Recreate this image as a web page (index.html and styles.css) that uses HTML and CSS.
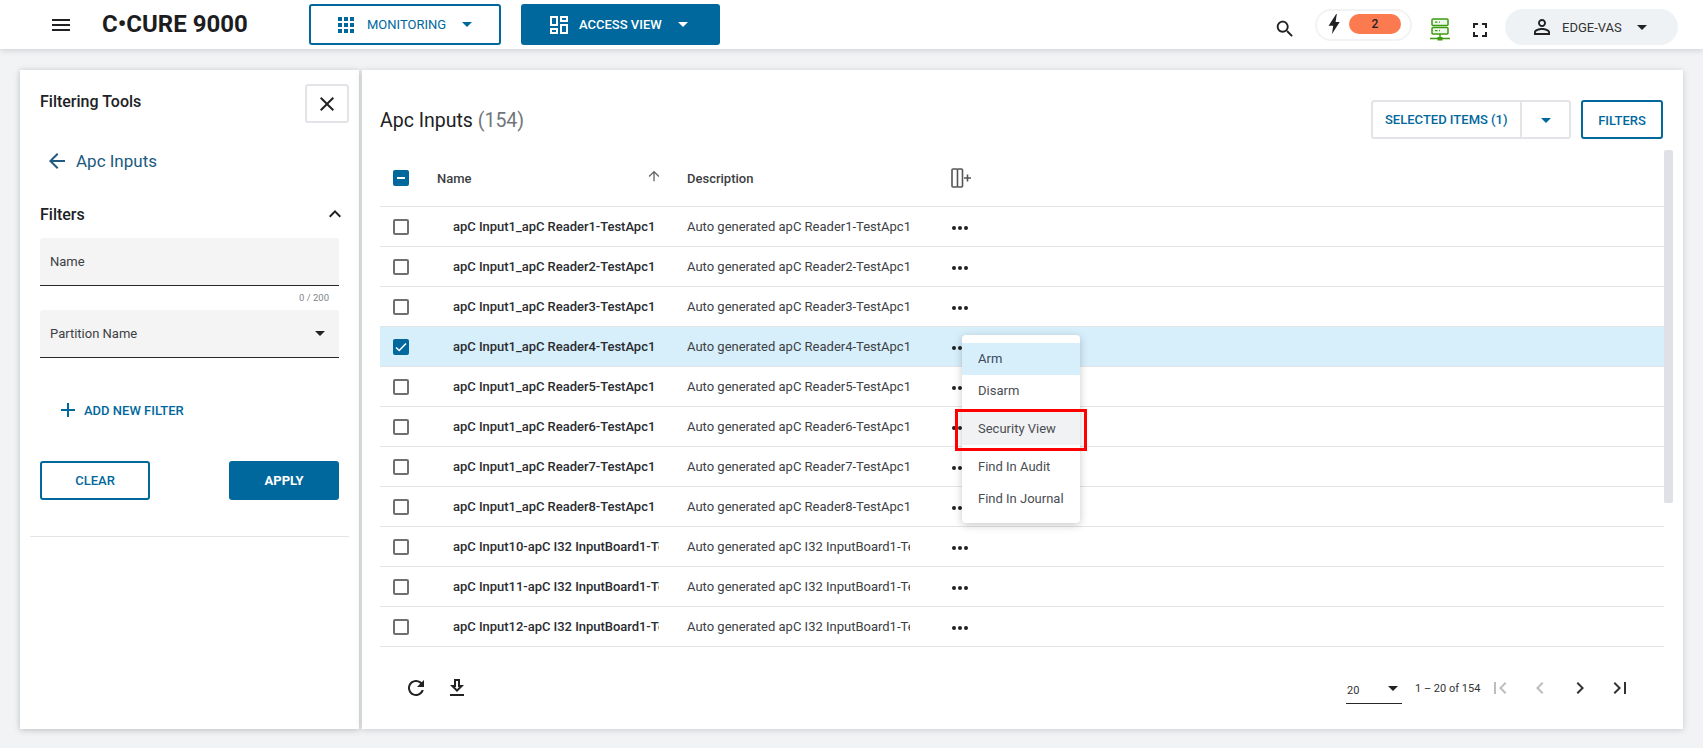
FILE: index.html
```html
<!DOCTYPE html>
<html lang="en">
<head>
<meta charset="utf-8">
<title>C•CURE 9000</title>
<link rel="stylesheet" href="styles.css">
</head>
<body>
<header class="topbar">
  <svg class="ico hamburger" viewBox="0 0 24 24"><path d="M3 18h18v-2H3v2zm0-5h18v-2H3v2zm0-7v2h18V6H3z"/></svg>
  <div class="brand">C•CURE 9000</div>
  <button class="navbtn navbtn-outline">
    <svg class="ico navicon-apps" viewBox="0 0 24 24"><path d="M4 8h4V4H4v4zm6 12h4v-4h-4v4zm-6 0h4v-4H4v4zm0-6h4v-4H4v4zm6 0h4v-4h-4v4zm6-10v4h4V4h-4zm-6 4h4V4h-4v4zm6 6h4v-4h-4v4zm0 6h4v-4h-4v4z"/></svg>
    <span>MONITORING</span><i class="caret caret-nav"></i>
  </button>
  <button class="navbtn navbtn-solid">
    <svg class="ico navicon-dash" viewBox="0 0 24 24"><path d="M19 5v2h-4V5h4M9 5v6H5V5h4m10 8v6h-4v-6h4M9 17v2H5v-2h4M21 3h-8v6h8V3zM11 3H3v10h8V3zm10 8h-8v10h8V11zm-10 4H3v6h8v-6z"/></svg>
    <span>ACCESS VIEW</span><i class="caret caret-nav"></i>
  </button>
  <div class="top-right">
    <svg class="ico search" viewBox="0 0 24 24"><path d="M15.5 14h-.79l-.28-.27C15.41 12.59 16 11.11 16 9.5 16 5.91 13.09 3 9.5 3S3 5.91 3 9.5 5.91 16 9.5 16c1.61 0 3.09-.59 4.23-1.57l.27.28v.79l5 4.99L20.49 19l-4.99-5zm-6 0C7.01 14 5 11.99 5 9.5S7.01 5 9.5 5 14 7.01 14 9.5 11.99 14 9.5 14z"/></svg>
    <div class="alarm">
      <svg class="ico bolt" viewBox="0 0 12 20"><path d="M4 20L5.200 11.800H.6L8.200 0h.6L7.600 8h4.100z"/></svg>
      <span class="alarm-count">2</span>
    </div>
    <svg class="server" viewBox="0 0 20 23" fill="none">
      <rect x="2" y="1" width="16" height="6.500" rx="1" fill="#eef8ee" stroke="#3d9a10" stroke-width="1.500"/>
      <rect x="2" y="9.500" width="16" height="6.500" rx="1" fill="#eef8ee" stroke="#3d9a10" stroke-width="1.500"/>
      <path d="M5 4.200h2.500M9 4.200h1M5 12.700h2.500M9 12.700h1" stroke="#3d9a10" stroke-width="1.300"/>
      <path d="M10 16v4M0 20.500h20" stroke="#3d9a10" stroke-width="1.500"/>
      <rect x="7.500" y="19" width="5" height="3.500" fill="#3d9a10"/>
    </svg>
    <svg class="ico fullscreen" viewBox="0 0 24 24"><path d="M7 14H5v5h5v-2H7v-3zm-2-4h2V7h3V5H5v5zm12 7h-3v2h5v-5h-2v3zM14 5v2h3v3h2V5h-5z"/></svg>
    <div class="user">
      <svg class="ico person" viewBox="0 0 24 24"><path d="M12 5.900c1.160 0 2.100.94 2.100 2.100s-.94 2.100-2.100 2.100S9.900 9.160 9.900 8s.94-2.100 2.100-2.100m0 9c2.970 0 6.100 1.460 6.100 2.100v1.100H5.900V17c0-.64 3.130-2.100 6.100-2.100M12 4C9.790 4 8 5.790 8 8s1.790 4 4 4 4-1.790 4-4-1.790-4-4-4zm0 9c-2.670 0-8 1.340-8 4v3h16v-3c0-2.660-5.330-4-8-4z"/></svg>
      <span>EDGE-VAS</span><i class="caret caret-dark"></i>
    </div>
  </div>
</header>

<div class="content">
  <aside class="sidebar">
    <div class="side-head">
      <h2 class="side-title">Filtering Tools</h2>
      <button class="closebtn"><svg class="ico" viewBox="0 0 24 24"><path d="M19 6.410L17.590 5 12 10.590 6.410 5 5 6.410 10.590 12 5 17.590 6.410 19 12 13.410 17.590 19 19 17.590 13.410 12z"/></svg></button>
    </div>
    <div class="back">
      <svg class="ico" viewBox="0 0 24 24"><path d="M20 11H7.830l5.590-5.590L12 4l-8 8 8 8 1.410-1.410L7.830 13H20v-2z"/></svg>
      <span>Apc Inputs</span>
    </div>
    <div class="filters-head">
      <h3 class="filters-title">Filters</h3>
      <svg class="ico" viewBox="0 0 24 24"><path d="M12 8l-6 6 1.410 1.410L12 10.830l4.590 4.580L18 14z"/></svg>
    </div>
    <div class="side-form">
      <div class="field"><span>Name</span></div>
      <div class="counter">0 / 200</div>
      <div class="field"><span>Partition Name</span><i class="caret caret-dark"></i></div>
      <div class="addfilter">
        <svg class="ico" viewBox="0 0 24 24"><path d="M19 13h-6v6h-2v-6H5v-2h6V5h2v6h6v2z"/></svg>
        <span>ADD NEW FILTER</span>
      </div>
      <div class="actions">
        <button class="btn btn-outline">CLEAR</button>
        <button class="btn btn-solid">APPLY</button>
      </div>
    </div>
    <div class="side-divider"></div>
  </aside>

  <main class="main">
    <div class="main-head">
      <h1 class="main-title">Apc Inputs <span class="count">(154)</span></h1>
      <div class="main-actions">
        <div class="splitbtn">
          <span class="split-label">SELECTED ITEMS (1)</span>
          <span class="split-caret"><i class="caret caret-blue"></i></span>
        </div>
        <button class="filtersbtn">FILTERS</button>
      </div>
    </div>

    <div class="table-wrap">
      <div class="table">
        <div class="row row-head">
          <div class="cell-check"><span class="cb cb-on"><i class="dash"></i></span></div>
          <div class="th-name"><span>Name</span><svg class="ico sort" viewBox="0 0 24 24"><path d="M4 12l1.410 1.410L11 7.830V20h2V7.830l5.580 5.590L20 12l-8-8-8 8z"/></svg></div>
          <div class="th-desc">Description</div>
          <div class="th-add">
            <svg class="coladd" viewBox="0 0 21 20" fill="none" stroke="#555" stroke-width="1.600"><rect x="1" y="1" width="5.500" height="18" rx="1"/><path d="M6.500 1h4a1 1 0 0 1 1 1v16a1 1 0 0 1-1 1h-4M16.500 6.500v7M13 10h7"/></svg>
          </div>
        </div>
        <div class="row"><div class="cell-check"><span class="cb"></span></div><div class="td-name">apC Input1_apC Reader1-TestApc1</div><div class="td-desc">Auto generated apC Reader1-TestApc1</div><div class="dots"><b></b><b></b><b></b></div></div>
        <div class="row"><div class="cell-check"><span class="cb"></span></div><div class="td-name">apC Input1_apC Reader2-TestApc1</div><div class="td-desc">Auto generated apC Reader2-TestApc1</div><div class="dots"><b></b><b></b><b></b></div></div>
        <div class="row"><div class="cell-check"><span class="cb"></span></div><div class="td-name">apC Input1_apC Reader3-TestApc1</div><div class="td-desc">Auto generated apC Reader3-TestApc1</div><div class="dots"><b></b><b></b><b></b></div></div>
        <div class="row row-selected"><div class="cell-check"><span class="cb cb-on"><svg viewBox="0 0 16 16" fill="none" stroke="#fff" stroke-width="1.500"><path d="M3 8.500l3.200 3L13 4.500"/></svg></span></div><div class="td-name">apC Input1_apC Reader4-TestApc1</div><div class="td-desc">Auto generated apC Reader4-TestApc1</div><div class="dots"><b></b><b></b><b></b></div></div>
        <div class="row"><div class="cell-check"><span class="cb"></span></div><div class="td-name">apC Input1_apC Reader5-TestApc1</div><div class="td-desc">Auto generated apC Reader5-TestApc1</div><div class="dots"><b></b><b></b><b></b></div></div>
        <div class="row"><div class="cell-check"><span class="cb"></span></div><div class="td-name">apC Input1_apC Reader6-TestApc1</div><div class="td-desc">Auto generated apC Reader6-TestApc1</div><div class="dots"><b></b><b></b><b></b></div></div>
        <div class="row"><div class="cell-check"><span class="cb"></span></div><div class="td-name">apC Input1_apC Reader7-TestApc1</div><div class="td-desc">Auto generated apC Reader7-TestApc1</div><div class="dots"><b></b><b></b><b></b></div></div>
        <div class="row"><div class="cell-check"><span class="cb"></span></div><div class="td-name">apC Input1_apC Reader8-TestApc1</div><div class="td-desc">Auto generated apC Reader8-TestApc1</div><div class="dots"><b></b><b></b><b></b></div></div>
        <div class="row"><div class="cell-check"><span class="cb"></span></div><div class="td-name">apC Input10-apC I32 InputBoard1-TestApc1</div><div class="td-desc">Auto generated apC I32 InputBoard1-TestApc1</div><div class="dots"><b></b><b></b><b></b></div></div>
        <div class="row"><div class="cell-check"><span class="cb"></span></div><div class="td-name">apC Input11-apC I32 InputBoard1-TestApc1</div><div class="td-desc">Auto generated apC I32 InputBoard1-TestApc1</div><div class="dots"><b></b><b></b><b></b></div></div>
        <div class="row"><div class="cell-check"><span class="cb"></span></div><div class="td-name">apC Input12-apC I32 InputBoard1-TestApc1</div><div class="td-desc">Auto generated apC I32 InputBoard1-TestApc1</div><div class="dots"><b></b><b></b><b></b></div></div>
      </div>
      <div class="scroll-thumb"></div>
    </div>

    <div class="footer">
      <div class="foot-left">
        <svg class="ico" viewBox="0 0 24 24"><path d="M17.650 6.350C16.200 4.900 14.210 4 12 4c-4.420 0-7.990 3.580-7.990 8s3.570 8 7.990 8c3.730 0 6.840-2.550 7.730-6h-2.080c-.82 2.330-3.040 4-5.650 4-3.310 0-6-2.690-6-6s2.690-6 6-6c1.660 0 3.140.69 4.220 1.780L13 11h7V4l-2.350 2.350z"/></svg>
        <svg class="ico" viewBox="0 0 24 24"><path d="M19 9h-4V3H9v6H5l7 7 7-7zm-8 2V5h2v6h1.170L12 13.170 9.830 11H11zm-6 7h14v2H5z"/></svg>
      </div>
      <div class="pager">
        <div class="pagesize"><span>20</span><i class="caret caret-dark"></i></div>
        <span class="range">1 – 20 of 154</span>
        <svg class="ico pg pg-off" viewBox="0 0 24 24"><path d="M18.410 16.590L13.820 12l4.590-4.590L17 6l-6 6 6 6zM6 6h2v12H6z"/></svg>
        <svg class="ico pg pg-off" viewBox="0 0 24 24"><path d="M15.410 7.410L14 6l-6 6 6 6 1.410-1.410L10.830 12z"/></svg>
        <svg class="ico pg" viewBox="0 0 24 24"><path d="M10 6L8.590 7.410 13.170 12l-4.580 4.590L10 18l6-6z"/></svg>
        <svg class="ico pg" viewBox="0 0 24 24"><path d="M5.590 7.410L10.180 12l-4.590 4.590L7 18l6-6-6-6zM16 6h2v12h-2z"/></svg>
      </div>
    </div>

    <div class="menu">
      <div class="menu-item menu-item-active">Arm</div>
      <div class="menu-item">Disarm</div>
      <div class="menu-item menu-item-hover">Security View</div>
      <div class="menu-item">Find In Audit</div>
      <div class="menu-item">Find In Journal</div>
    </div>
    <div class="callout"></div>
  </main>
</div>
</body>
</html>
```
FILE: styles.css
```css
* { box-sizing: border-box; }
html, body { margin: 0; height: 100%; }
body {
  width: 1703px; height: 748px; overflow: hidden;
  background: #f1f3f5; color: #202124;
  font-family: Roboto, "Liberation Sans", sans-serif; font-size: 13px;
  display: flex; flex-direction: column;
}
button { font-family: inherit; cursor: pointer; margin: 0; padding: 0; }
h1, h2, h3 { margin: 0; font-weight: 500; }
.ico { width: 24px; height: 24px; fill: currentColor; flex: none; display: block; }

.caret { display: block; flex: none; width: 0; height: 0; border-left: 5px solid transparent; border-right: 5px solid transparent; border-top: 5px solid currentColor; }
.caret-dark { color: #212121; }
.caret-blue { color: #00689d; }

/* Top bar */
.topbar {
  flex: none; height: 49px; background: #fff; display: flex; align-items: center;
  padding-left: 49px; box-shadow: 0 1px 6px rgba(60, 64, 67, .22); position: relative; z-index: 2;
}
.hamburger { margin-right: 29px; }
.brand { width: 207px; font-size: 24px; font-weight: 700; color: #1d1d1f; margin-top: -2px; white-space: nowrap; }
.navbtn { height: 41px; border-radius: 3px; display: flex; align-items: center; font-size: 13px; font-weight: 500; }
.navbtn-outline { width: 192px; background: #fff; border: 2px solid #00689d; color: #00689d; padding-left: 23px; margin-right: 20px; font-weight: 400; }
.navbtn-solid { width: 199px; background: #00689d; border: 0; color: #fff; padding-left: 26px; }
.navicon-apps { margin-right: 9px; }
.navicon-dash { margin-right: 8px; }
.caret-nav { margin-left: 16px; }
.top-right { margin-left: auto; display: flex; align-items: flex-start; padding-right: 25px; }
.search { width: 22px; height: 22px; margin-top: 14px; margin-right: 19px; }
.alarm { width: 97px; height: 32px; margin-top: 5px; border: 2px solid #f2f3f5; border-radius: 16px; display: flex; align-items: center; padding-left: 11px; margin-right: 18px; }
.bolt { width: 12px; height: 20px; margin-right: 9px; margin-top: -2px; }
.alarm-count { width: 52px; height: 20px; border-radius: 10px; background: #fb7a50; text-align: center; line-height: 20px; font-weight: 500; font-size: 12px; margin-top: -2px; }
.server { width: 20px; height: 23px; margin-top: 14px; margin-right: 18px; display: block; }
.fullscreen { margin-top: 14px; margin-right: 13px; }
.user { width: 173px; height: 36px; margin-top: 5px; background: #eff2f5; border-radius: 18px; display: flex; align-items: center; padding-left: 25px; font-size: 13px; color: #333; }
.person { margin-right: 8px; color: #222; }
.user .caret { margin-left: 15px; }

/* Content */
.content { flex: 1; min-height: 0; display: flex; gap: 3px; padding: 21px 20px 19px; }

/* Sidebar */
.sidebar { flex: none; width: 339px; background: #fff; box-shadow: 0 1px 6px rgba(60, 64, 67, .3); position: relative; }
.side-head { display: flex; justify-content: space-between; padding: 14px 10px 0 20px; }
.side-title { font-size: 16px; color: #202124; margin-top: 8px; line-height: 19px; }
.closebtn { width: 44px; height: 39px; background: #fff; border: 2px solid #e3e4e8; border-radius: 3px; display: flex; align-items: center; justify-content: center; color: #222; }
.back { display: flex; align-items: center; margin-top: 26px; padding-left: 25px; color: #205a80; font-size: 17px; height: 24px; }
.back span { margin-left: 7px; }
.filters-head { display: flex; align-items: center; justify-content: space-between; margin-top: 29px; padding: 0 12px 0 20px; height: 24px; }
.filters-title { font-size: 16px; color: #202124; }
.side-form { padding: 0 20px; margin-top: 12px; }
.field { height: 48px; background: #f4f4f5; border-bottom: 1px solid #27272a; border-radius: 3px 3px 0 0; display: flex; align-items: center; justify-content: space-between; padding: 0 14px 0 10px; font-size: 13px; color: #3c4043; }
.counter { height: 24px; padding: 6px 10px 0 0; text-align: right; font-size: 9.500px; color: #80868b; }
.addfilter { display: flex; align-items: center; margin-top: 40px; padding-left: 16px; height: 24px; color: #00689d; font-size: 13px; font-weight: 500; }
.addfilter span { margin-left: 4px; }
.actions { display: flex; justify-content: space-between; margin-top: 39px; }
.btn { width: 110px; height: 39px; border-radius: 3px; font-size: 13px; font-weight: 500; }
.btn-outline { background: #fff; border: 2px solid #00689d; color: #00689d; }
.btn-solid { background: #00689d; border: 0; color: #fff; font-weight: 700; }
.side-divider { height: 1px; margin: 36px 10px 0; background: #e3e4e8; }

/* Main */
.main { flex: 1; min-width: 0; background: #fff; box-shadow: 0 1px 6px rgba(60, 64, 67, .22); position: relative; padding: 30px 20px 0 18px; display: flex; flex-direction: column; }
.main-head { display: flex; justify-content: space-between; align-items: flex-start; height: 39px; }
.main-title { font-size: 19.500px; font-weight: 400; line-height: 42px; color: #202124; }
.count { color: #70757a; }
.main-actions { display: flex; gap: 10px; }
.splitbtn { width: 200px; height: 39px; border: 2px solid #e3e4e8; border-radius: 3px; display: flex; align-items: center; color: #00689d; font-size: 13px; font-weight: 500; }
.split-label { width: 149px; height: 100%; border-right: 2px solid #e3e4e8; padding-left: 12px; line-height: 35px; white-space: nowrap; }
.split-caret { flex: 1; display: flex; justify-content: center; padding-top: 2px; }
.filtersbtn { width: 82px; height: 39px; background: #fff; border: 2px solid #00689d; border-radius: 3px; color: #00689d; font-size: 13px; font-weight: 500; padding-top: 1px; }

.table-wrap { margin-top: 11px; display: flex; align-items: flex-start; margin-right: -10px; }
.table { width: 1284px; flex: none; }
.scroll-thumb { width: 9px; height: 353px; background: #e0e1e6; border-radius: 2px; }
.row { display: grid; grid-template-columns: 57px 250px 265px 1fr; align-items: center; height: 40px; border-bottom: 1px solid #e3e4e8; }
.row-head { height: 57px; }
.row-selected { background: #d7eefb; }
.cell-check { padding-left: 13px; display: flex; }
.cb { width: 16px; height: 16px; border: 2px solid #6f6f6f; border-radius: 2px; display: flex; align-items: center; justify-content: center; background: #fff; }
.cb svg { width: 16px; height: 16px; flex: none; }
.cb-on { background: #00689d; border: 0; }
.dash { width: 8px; height: 2px; background: #fff; display: block; }
.th-name { display: flex; justify-content: space-between; padding-right: 26px; color: #3c4043; font-weight: 500; align-items: center; }
.sort { width: 16px; height: 16px; color: #666; margin-top: -5px; margin-right: -1px; }
.th-desc { color: #3c4043; font-weight: 500; }
.coladd { width: 21px; height: 20px; display: block; margin-left: -1px; }
.td-name { margin-left: 16px; margin-right: 28px; overflow: hidden; white-space: nowrap; font-weight: 500; letter-spacing: -.03px; color: #2a2c30; }
.td-desc { margin-right: 42px; overflow: hidden; white-space: nowrap; color: #3c4043; }
.dots { display: flex; gap: 2px; margin-top: 2px; }
.dots b { width: 4px; height: 4px; border-radius: 50%; background: #212121; display: block; }

.footer { display: flex; justify-content: space-between; align-items: flex-start; padding: 29px 0 0 24px; flex: 1; }
.foot-left { display: flex; gap: 17px; color: #222; }
.pager { display: flex; align-items: center; height: 24px; color: #333; }
.pagesize { width: 56px; height: 26px; margin-top: 6px; border-bottom: 1px solid #27272a; display: flex; align-items: center; justify-content: space-between; padding: 0 4px 0 1px; margin-right: 13px; font-size: 11px; }
.pagesize .caret { margin-top: -4px; }
.range { width: 73px; font-size: 11px; white-space: nowrap; }
.pg { margin-right: 16px; color: #333; }
.pg-off { color: #bdbdbd; }
.pg:last-child { margin-right: 31px; }

/* Popup menu */
.menu { position: absolute; left: 600px; top: 265px; width: 118px; height: 188px; padding-top: 8px; background: #fff; border-radius: 4px; box-shadow: 0 2px 8px rgba(0, 0, 0, .22); z-index: 3; }
.menu-item { height: 32px; padding-left: 16px; line-height: 31px; font-size: 13px; color: #4a4d52; }
.menu-item-active { background: #d7eefb; color: #3c4a5c; }
.menu-item-hover { height: 33px; margin: 5px 0 6px; background: #f1f2f4; line-height: 33px; }
.callout { position: absolute; left: 593px; top: 339px; width: 132px; height: 42px; border: 3px solid #ff0000; z-index: 4; }
```
